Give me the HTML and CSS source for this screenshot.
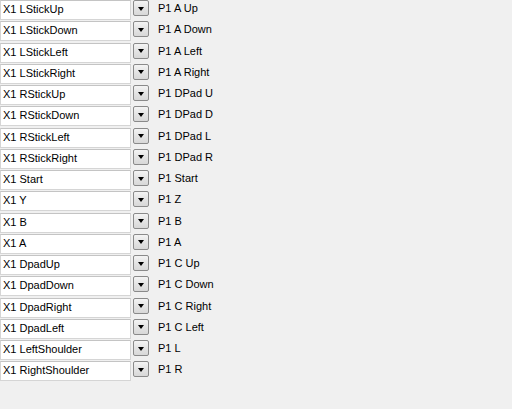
FILE: index.html
```html
<!DOCTYPE html>
<html lang="en">
<head>
    <meta charset="UTF-8">
    <title>Input Mapping</title>
    <link rel="stylesheet" href="styles.css">
</head>
<body>
    <div class="mapList">
        <div class="row"><div class="box">X1 LStickUp</div><div class="drop"><span class="arrow"></span></div><span class="target">P1 A Up</span></div>
        <div class="row"><div class="box">X1 LStickDown</div><div class="drop"><span class="arrow"></span></div><span class="target">P1 A Down</span></div>
        <div class="row"><div class="box">X1 LStickLeft</div><div class="drop"><span class="arrow"></span></div><span class="target">P1 A Left</span></div>
        <div class="row"><div class="box">X1 LStickRight</div><div class="drop"><span class="arrow"></span></div><span class="target">P1 A Right</span></div>
        <div class="row"><div class="box">X1 RStickUp</div><div class="drop"><span class="arrow"></span></div><span class="target">P1 DPad U</span></div>
        <div class="row"><div class="box">X1 RStickDown</div><div class="drop"><span class="arrow"></span></div><span class="target">P1 DPad D</span></div>
        <div class="row"><div class="box">X1 RStickLeft</div><div class="drop"><span class="arrow"></span></div><span class="target">P1 DPad L</span></div>
        <div class="row"><div class="box">X1 RStickRight</div><div class="drop"><span class="arrow"></span></div><span class="target">P1 DPad R</span></div>
        <div class="row"><div class="box">X1 Start</div><div class="drop"><span class="arrow"></span></div><span class="target">P1 Start</span></div>
        <div class="row"><div class="box">X1 Y</div><div class="drop"><span class="arrow"></span></div><span class="target">P1 Z</span></div>
        <div class="row"><div class="box">X1 B</div><div class="drop"><span class="arrow"></span></div><span class="target">P1 B</span></div>
        <div class="row"><div class="box">X1 A</div><div class="drop"><span class="arrow"></span></div><span class="target">P1 A</span></div>
        <div class="row"><div class="box">X1 DpadUp</div><div class="drop"><span class="arrow"></span></div><span class="target">P1 C Up</span></div>
        <div class="row"><div class="box">X1 DpadDown</div><div class="drop"><span class="arrow"></span></div><span class="target">P1 C Down</span></div>
        <div class="row"><div class="box">X1 DpadRight</div><div class="drop"><span class="arrow"></span></div><span class="target">P1 C Right</span></div>
        <div class="row"><div class="box">X1 DpadLeft</div><div class="drop"><span class="arrow"></span></div><span class="target">P1 C Left</span></div>
        <div class="row"><div class="box">X1 LeftShoulder</div><div class="drop"><span class="arrow"></span></div><span class="target">P1 L</span></div>
        <div class="row"><div class="box">X1 RightShoulder</div><div class="drop"><span class="arrow"></span></div><span class="target">P1 R</span></div>
    </div>
</body>
</html>
```

FILE: styles.css
```css
body {
    margin: 0;
    background: #f0f0f0;
    font-family: "Liberation Sans", Arial, sans-serif;
    font-size: 11px;
    color: #000;
}

.mapList {
    display: flex;
    flex-direction: column;
}

.row {
    display: flex;
    align-items: flex-start;
    height: 21.25px;
}

.box {
    box-sizing: border-box;
    width: 131px;
    height: 20px;
    padding: 2px 0 0 2px;
    background: #fff;
    border: 1px solid #d5d5d5;
    border-top-color: #c4c4c4;
    white-space: nowrap;
}

.drop {
    box-sizing: border-box;
    width: 16px;
    height: 16px;
    margin: 0 0 0 2px;
    border: 1px solid #8a8a8a;
    border-radius: 2px;
    background: linear-gradient(#f4f4f4, #e4e4e4 50%, #d8d8d8);
    display: flex;
    align-items: center;
    justify-content: center;
}

.arrow {
    width: 0;
    height: 0;
    border-left: 3.5px solid transparent;
    border-right: 3.5px solid transparent;
    border-top: 4px solid #000;
    margin-top: 1px;
}

.target {
    margin-left: 9px;
    padding-top: 2px;
    white-space: nowrap;
}
```
